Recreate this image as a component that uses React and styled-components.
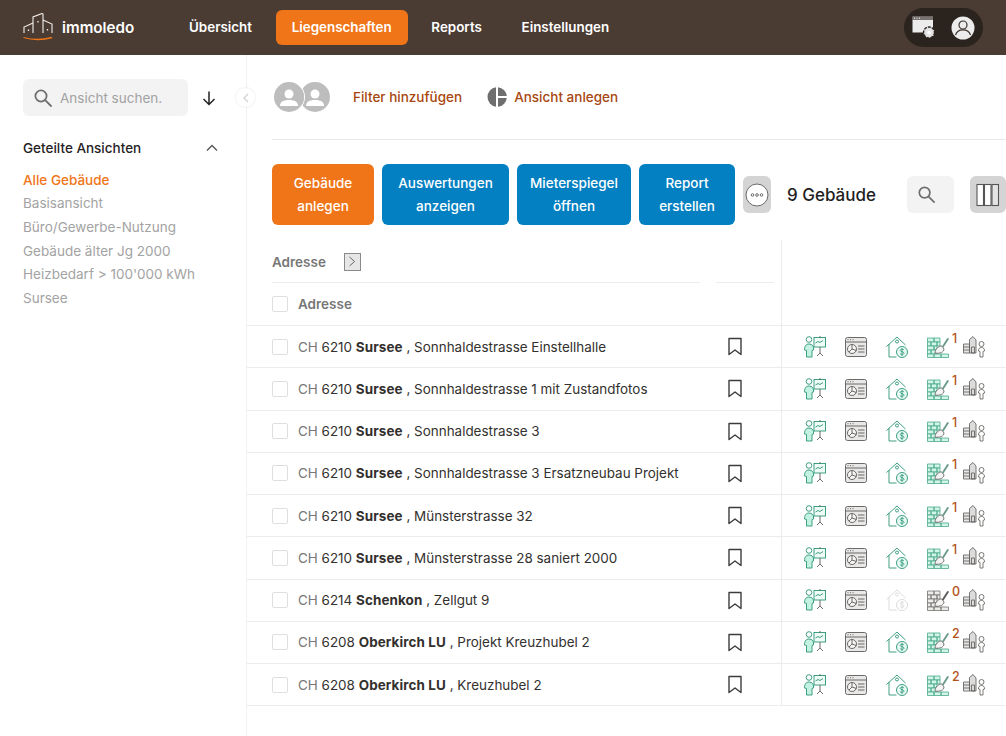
import React from 'react';
import styled, { createGlobalStyle } from 'styled-components';

const GREEN = '#2a9476';
const MINT = '#c4f2e2';
const GREY = '#5c5957';
const LIGHT = '#d8d8d8';

const rows = [
  { zip: '6210', city: 'Sursee', street: 'Sonnhaldestrasse Einstellhalle', count: 1 },
  { zip: '6210', city: 'Sursee', street: 'Sonnhaldestrasse 1 mit Zustandfotos', count: 1 },
  { zip: '6210', city: 'Sursee', street: 'Sonnhaldestrasse 3', count: 1 },
  { zip: '6210', city: 'Sursee', street: 'Sonnhaldestrasse 3 Ersatzneubau Projekt', count: 1 },
  { zip: '6210', city: 'Sursee', street: 'Münsterstrasse 32', count: 1 },
  { zip: '6210', city: 'Sursee', street: 'Münsterstrasse 28 saniert 2000', count: 1 },
  { zip: '6214', city: 'Schenkon', street: 'Zellgut 9', count: 0 },
  { zip: '6208', city: 'Oberkirch LU', street: 'Projekt Kreuzhubel 2', count: 2 },
  { zip: '6208', city: 'Oberkirch LU', street: 'Kreuzhubel 2', count: 2 },
];

const views = ['Alle Gebäude', 'Basisansicht', 'Büro/Gewerbe-Nutzung', 'Gebäude älter Jg 2000', 'Heizbedarf > 100\'000 kWh', 'Sursee'];

const GlobalStyle = createGlobalStyle`
  html, body {
    margin: 0;
    padding: 0;
    background: #fff;
    font-family: Inter, "Liberation Sans", sans-serif;
    overflow: hidden;
  }
  * { box-sizing: border-box; }
`;

const Page = styled.div`
  width: 1006px;
  height: 736px;
  overflow: hidden;
`;

const Header = styled.header`
  height: 55px;
  background: #4a3c33;
  display: flex;
  align-items: center;
  padding: 0 23px;
`;

const Logo = styled.div`
  display: flex;
  align-items: center;
  gap: 9px;
  width: 150px;
  color: #fff;
  font-size: 15.2px;
  font-weight: 600;
  padding-bottom: 1px;
`;

const Nav = styled.nav`
  display: flex;
  align-items: center;
  gap: 7.7px;
`;

const NavItem = styled.a`
  height: 35px;
  display: flex;
  align-items: center;
  padding: 0 16px 1px;
  border-radius: 6px;
  font-size: 13.4px;
  font-weight: 600;
  color: #fff;
  background: ${(p) => (p.$active ? '#ef7518' : 'transparent')};
`;

const UserPill = styled.div`
  margin-left: auto;
  width: 79px;
  height: 39px;
  border-radius: 20px;
  background: #2b231e;
  display: flex;
  align-items: center;
  justify-content: space-between;
  padding: 0 8px;
`;

const Body = styled.div`
  display: flex;
  height: 681px;
`;

const Sidebar = styled.aside`
  position: relative;
  width: 247px;
  flex: none;
  border-right: 1px solid #f1f1f1;
  padding: 24px 0 0 23px;
`;

const SearchRow = styled.div`
  display: flex;
  align-items: center;
`;

const SearchBox = styled.div`
  width: 165px;
  height: 37px;
  border-radius: 6px;
  background: #f3f3f3;
  display: flex;
  align-items: center;
  gap: 7px;
  padding-left: 10px;
  color: #a2a2a2;
  font-size: 13.5px;
  white-space: nowrap;
`;

const SortButton = styled.div`
  margin-left: 11px;
  display: flex;
`;

const CollapseButton = styled.div`
  position: absolute;
  top: 33px;
  right: -9px;
  width: 19px;
  height: 19px;
  border-radius: 50%;
  background: #fff;
  box-shadow: 0 0 3px rgba(0, 0, 0, 0.1);
  display: flex;
  align-items: center;
  justify-content: center;
`;

const SectionHead = styled.div`
  width: 195px;
  margin-top: 22.5px;
  display: flex;
  align-items: center;
  justify-content: space-between;
  font-size: 13.5px;
  font-weight: 500;
  color: #26221f;
  line-height: 18px;
`;

const ViewList = styled.ul`
  list-style: none;
  margin: 12.4px 0 0;
  padding: 0;
`;

const ViewItem = styled.li`
  font-size: 13.5px;
  line-height: 23.6px;
  color: ${(p) => (p.$active ? '#ef7518' : '#a3a3a3')};
  font-weight: ${(p) => (p.$active ? 500 : 400)};
`;

const Main = styled.main`
  flex: 1;
  min-width: 0;
`;

const FilterBar = styled.div`
  height: 85px;
  margin-left: 25px;
  border-bottom: 1px solid #e8e8e8;
  display: flex;
  align-items: center;
  padding: 0 0 1px 2px;
`;

const Avatars = styled.div`
  display: flex;
  width: 79px;
  flex: none;
`;

const FrontAvatar = styled.span`
  position: relative;
  z-index: 1;
  display: flex;
  border-radius: 50%;
  box-shadow: 0 0 0 1px #fff;
`;

const BackAvatar = styled.span`
  display: flex;
  margin-left: -4px;
`;

const LinkText = styled.span`
  display: flex;
  align-items: center;
  gap: 7px;
  color: #a8470f;
  font-size: 13.5px;
  font-weight: 500;
  margin-right: 25px;
`;

const Toolbar = styled.div`
  margin: 24px 0 0 25px;
  display: flex;
  align-items: center;
  height: 61px;
`;

const ActionButton = styled.div`
  width: ${(p) => p.$w}px;
  height: 61px;
  flex: none;
  margin-right: 8px;
  border-radius: 6px;
  background: ${(p) => (p.$orange ? '#ef7518' : '#0380c1')};
  color: #fff;
  font-size: 13.5px;
  font-weight: 500;
  line-height: 23px;
  padding-top: 1px;
  text-align: center;
  display: flex;
  align-items: center;
  justify-content: center;
`;

const SquareButton = styled.div`
  flex: none;
  width: ${(p) => p.$w}px;
  height: 37px;
  padding-right: ${(p) => p.$pr || 0}px;
  border-radius: 6px;
  background: ${(p) => (p.$dark ? '#d4d4d4' : '#f3f3f3')};
  display: flex;
  align-items: center;
  justify-content: center;
`;

const Count = styled.div`
  flex: none;
  width: 136px;
  padding-left: 16px;
  font-size: 17px;
  font-weight: 500;
  color: #1f1f1f;
`;

const Spacer = styled.div`
  flex: none;
  width: 16px;
`;

const Table = styled.div`
  margin-top: 15px;
  display: grid;
  grid-template-columns: 468px 66px 225px;
`;

const HeadLeft = styled.div`
  height: 43px;
  margin: 0 15px 0 25px;
  border-bottom: 1px solid #ececec;
  display: flex;
  align-items: center;
  padding-top: 1px;
  gap: 18px;
  color: #777;
  font-size: 13.5px;
  font-weight: 600;
`;

const ExpandButton = styled.div`
  width: 17px;
  height: 18px;
  border: 1px solid #8a8a8a;
  background: #e6e6e6;
  display: flex;
  align-items: center;
  justify-content: center;
`;

const HeadMiddle = styled.div`
  height: 43px;
  margin: 0 7px 0 1px;
  border-bottom: 1px solid #ececec;
`;

const RightCell = styled.div`
  border-left: 1px solid #ececec;
  border-bottom: ${(p) => (p.$line ? '1px solid #ececec' : 'none')};
  height: 43px;
`;

const TitleCell = styled.div`
  height: 43px;
  grid-column: 1 / 3;
  border-bottom: 1px solid #ececec;
  padding-left: 25px;
  display: flex;
  align-items: center;
  gap: 10px;
  color: #777;
  font-size: 13.5px;
  font-weight: 600;
`;

const Check = styled.span`
  flex: none;
  width: 16px;
  height: 16px;
  border: 1.5px solid #dedede;
  border-radius: 2px;
  background: #fff;
`;

const AddressCell = styled.div`
  height: 42.25px;
  padding-left: 25px;
  border-bottom: 1px solid #ececec;
  display: flex;
  align-items: center;
  gap: 10px;
  font-size: 13.45px;
  color: #33302e;
  white-space: nowrap;

  b {
    letter-spacing: 0.1px;
  }
`;

const Country = styled.span`
  color: #777;
`;

const BookCell = styled.div`
  height: 42.25px;
  border-bottom: 1px solid #ececec;
  display: flex;
  align-items: center;
  padding-left: 12px;
`;

const IconsCell = styled.div`
  height: 42.25px;
  border-left: 1px solid #ececec;
  border-bottom: 1px solid #ececec;
  display: flex;
  align-items: center;
  padding-left: 22px;
`;

const IconSlot = styled.div`
  position: relative;
  flex: none;
  width: ${(p) => p.$w}px;
  display: flex;
`;

const Badge = styled.span`
  position: absolute;
  top: -4px;
  left: 25px;
  font-size: 12.5px;
  font-weight: 500;
  color: #b3521a;
  line-height: 14px;
`;

function LogoMark() {
  return (
    <svg width="30" height="29" viewBox="0 0 30 29" fill="none" stroke="#f3efec" strokeWidth="1.1">
      <path d="M1 20v-6l9-4" />
      <path d="M10 20V4l9-3.500 1 .5v19" />
      <path d="M20 7l9 4v9" />
      <path d="M5.500 16.500v1.500M15 8v1.500M24.500 16v1.500" strokeWidth="1.300" />
      <path d="M.5 24.500Q14.500 28.500 29 24.500" stroke="#ef7518" strokeWidth="1.300" />
    </svg>
  );
}

function PersonDisc() {
  return (
    <svg width="30" height="30" viewBox="0 0 30 30">
      <circle cx="15" cy="15" r="15" fill="#bdbdbd" />
      <circle cx="15" cy="12" r="4.500" fill="#fff" />
      <path d="M6 24c0-4 3-6 9-6s9 2 9 6z" fill="#fff" />
    </svg>
  );
}

function SearchIcon({ color = '#6f6f6f', size = 20 }) {
  return (
    <svg width={size} height={size} viewBox="0 0 20 20" fill="none" stroke={color} strokeWidth="1.800">
      <circle cx="8" cy="8" r="5.600" />
      <path d="M12.200 12.200 18 18" strokeLinecap="round" />
    </svg>
  );
}

function BrowserGear() {
  return (
    <svg width="24" height="24" viewBox="0 0 24 24">
      <rect x=".5" y=".5" width="20.500" height="16" fill="#ececec" />
      <rect x=".5" y=".5" width="20.500" height="3.500" fill="#2b231e" opacity=".6" />
      <path d="M2 2.200h1M4.500 2.200h1M7 2.200h1" stroke="#fff" />
      <circle cx="17" cy="16.500" r="5.500" fill="#e2e2e2" stroke="#2b231e" strokeWidth="1.400" strokeDasharray="3 1" />
      <circle cx="17" cy="16.500" r="1.800" fill="#fff" />
    </svg>
  );
}

function UserCircle() {
  return (
    <svg width="24" height="24" viewBox="0 0 24 24" fill="none" stroke="#3a322c" strokeWidth="1.200">
      <circle cx="12" cy="12" r="11.500" fill="#ececec" stroke="none" />
      <circle cx="12" cy="9" r="4" />
      <path d="M4.500 19c1-3.600 4-5.200 7.500-5.200s6.500 1.600 7.500 5.200" />
    </svg>
  );
}

function PieIcon() {
  return (
    <svg width="20" height="20" viewBox="0 0 20 20" fill="#6e6e6e">
      <path d="M9 .2A9.900 9.900 0 0 0 9 19.800z" />
      <path d="M11 .2V9h8.800A9.900 9.900 0 0 0 11 .2z" />
      <path d="M11 11v8.800a9.900 9.900 0 0 0 8.800-8.800z" />
    </svg>
  );
}

function DotsIcon() {
  return (
    <svg width="24" height="24" viewBox="0 0 24 24" fill="#fff" stroke="#6a6a6a">
      <circle cx="12" cy="12" r="11" />
      <circle cx="7.500" cy="12" r="1.300" fill="none" />
      <circle cx="12" cy="12" r="1.300" fill="none" />
      <circle cx="16.500" cy="12" r="1.300" fill="none" />
    </svg>
  );
}

function ColumnsIcon() {
  return (
    <svg width="24" height="24" viewBox="0 0 24 24" fill="#fff" stroke="#555" strokeWidth="1.100">
      <rect x="1" y="1.500" width="6.500" height="21" />
      <rect x="8.500" y="1.500" width="6.500" height="21" />
      <rect x="16" y="1.500" width="6.500" height="21" fill="#e4e4e4" />
    </svg>
  );
}

function BookmarkIcon() {
  return (
    <svg width="16" height="19" viewBox="0 0 16 19" fill="none" stroke="#3c3c3c" strokeWidth="1.400" strokeLinejoin="round">
      <path d="M2 1.500h12v16l-6-4.500-6 4.500z" />
    </svg>
  );
}

function PresenterIcon() {
  return (
    <svg width="22" height="22" viewBox="0 0 22 22" fill="none" stroke={GREEN} strokeWidth=".9">
      <circle cx="5" cy="3.500" r="2.800" />
      <path d="M.5 14c0-4 1.500-6 4.500-6s4.500 2 4.500 4v2l-1.500.5V21H2.500v-6.500z" fill={MINT} />
      <rect x="10" y="1.500" width="11.500" height="9.500" fill="#eefbf6" />
      <path d="M11.500 7l2.500-1.500 2 1 3-2" />
      <path d="M16 0v1.500M16 11v6M13 20l3-3 3 3" stroke={GREY} />
    </svg>
  );
}

function BrowserChartIcon() {
  return (
    <svg width="22" height="20" viewBox="0 0 22 20" fill="none" stroke={GREY} strokeWidth=".9">
      <rect x=".5" y=".5" width="21" height="19" rx="2" fill="#e8e8e8" />
      <path d="M.5 5h21" />
      <path d="M2.500 2.700h1M5 2.700h1M7.500 2.700h1" />
      <circle cx="7" cy="12" r="4.500" fill="#f6f6f6" />
      <path d="M7 12V7.500M7 12l4.300 1.500M7 12l-3 3" />
      <path d="M13 9h6.500M13 12h6.500M13 15h6.500" />
    </svg>
  );
}

function HouseIcon({ off }) {
  const c = off ? LIGHT : GREEN;
  return (
    <svg width="22" height="22" viewBox="0 0 22 22" fill="none" stroke={c} strokeWidth=".9">
      <path d="M.5 10.500 11 1l8.500 8" />
      <path d="M3 8v13h7.500" />
      <circle cx="11" cy="5.500" r="1.500" />
      <circle cx="16" cy="16" r="5.500" fill={off ? '#fff' : '#e6f9f2'} />
      <path d="M18 14c-.5-1-3.500-1.200-3.800.3-.2 1.800 4 1 3.800 3-.2 1.500-3.300 1.300-4 .2M16 12v8" strokeWidth=".8" />
    </svg>
  );
}

function WallIcon({ off }) {
  const c = off ? '#77736f' : '#4aa88c';
  return (
    <svg width="22" height="22" viewBox="0 0 22 22" fill={off ? '#ececec' : '#d2f5e8'} stroke={c} strokeWidth=".8">
      <path d="M.5 2h6.500v4H.5zM7 2h6v4H7z" />
      <path d="M.5 6H4v4H.5zM4 6h6v4H4zM10 6h3v4h-3z" />
      <path d="M.5 10H7v4H.5zM7 10h3v4H7z" />
      <path d="M.5 14H4v4H.5zM4 14h6v4H4z" />
      <path d="M.5 18H7v3.500H.5zM7 18h7v3.500H7zM14 18h7.500v3.500H14z" />
      <path d="M8 17c0-4 4-7.500 7-7l2 3c0 3-4 5-9 4z" fill="#f4f4f4" stroke={GREY} />
      <path d="M16 10.500l4.800-7.500" fill="none" stroke={off ? GREY : '#6c9a8d'} strokeWidth="1.900" strokeLinecap="round" />
    </svg>
  );
}

function BuildingPersonIcon() {
  return (
    <svg width="23" height="22" viewBox="0 0 23 22" fill="none" stroke={GREY} strokeWidth=".8">
      <path d="M.5 8H6.500v9H.5z" fill="#e6e6e6" />
      <path d="M6.500 17V3.500L10 .5l3 3.500v13z" fill="#dcdcdc" />
      <path d="M.5 11h6M.5 14h6M8.500 11h3v6h-3z" />
      <circle cx="18.500" cy="8" r="2.500" fill="#fff" />
      <path d="M15.500 15c0-2.500 1-3.500 3-3.500s3 1 3 3.500l-1.500.5V21h-3v-5.500z" fill="#fff" />
    </svg>
  );
}

function RowIcons({ count }) {
  return (
    <>
      <IconSlot $w={41}><PresenterIcon /></IconSlot>
      <IconSlot $w={41}><BrowserChartIcon /></IconSlot>
      <IconSlot $w={41}><HouseIcon off={count === 0} /></IconSlot>
      <IconSlot $w={36}>
        <WallIcon off={count === 0} />
        <Badge>{count}</Badge>
      </IconSlot>
      <IconSlot $w={24}><BuildingPersonIcon /></IconSlot>
    </>
  );
}

export default function App() {
  return (
    <Page>
      <GlobalStyle />
      <Header>
        <Logo>
          <LogoMark />
          immoledo
        </Logo>
        <Nav>
          <NavItem>Übersicht</NavItem>
          <NavItem $active>Liegenschaften</NavItem>
          <NavItem>Reports</NavItem>
          <NavItem>Einstellungen</NavItem>
        </Nav>
        <UserPill>
          <BrowserGear />
          <UserCircle />
        </UserPill>
      </Header>
      <Body>
        <Sidebar>
          <SearchRow>
            <SearchBox>
              <SearchIcon />
              Ansicht suchen.
            </SearchBox>
            <SortButton>
              <svg width="20" height="20" viewBox="0 0 20 20" fill="none" stroke="#222" strokeWidth="1.500">
                <path d="M10 3.500v13M4.500 11l5.500 5.500 5.500-5.500" />
              </svg>
            </SortButton>
          </SearchRow>
          <CollapseButton>
            <svg width="8" height="10" viewBox="0 0 8 10" fill="none" stroke="#d0d0d0" strokeWidth="1.200">
              <path d="M6 1 2 5l4 4" />
            </svg>
          </CollapseButton>
          <SectionHead>
            Geteilte Ansichten
            <svg width="12" height="8" viewBox="0 0 12 8" fill="none" stroke="#555" strokeWidth="1.300">
              <path d="M1 6.500 6 1.500l5 5" />
            </svg>
          </SectionHead>
          <ViewList>
            {views.map((v, i) => (
              <ViewItem key={v} $active={i === 0}>{v}</ViewItem>
            ))}
          </ViewList>
        </Sidebar>
        <Main>
          <FilterBar>
            <Avatars>
              <FrontAvatar><PersonDisc /></FrontAvatar>
              <BackAvatar><PersonDisc /></BackAvatar>
            </Avatars>
            <LinkText>Filter hinzufügen</LinkText>
            <LinkText><PieIcon />Ansicht anlegen</LinkText>
          </FilterBar>
          <Toolbar>
            <ActionButton $w={102} $orange>Gebäude<br />anlegen</ActionButton>
            <ActionButton $w={127}>Auswertungen<br />anzeigen</ActionButton>
            <ActionButton $w={114}>Mieterspiegel<br />öffnen</ActionButton>
            <ActionButton $w={96}>Report<br />erstellen</ActionButton>
            <SquareButton $w={28} $dark><DotsIcon /></SquareButton>
            <Count>9 Gebäude</Count>
            <SquareButton $w={47} $pr={8}><SearchIcon size={19} /></SquareButton>
            <Spacer />
            <SquareButton $w={36} $dark><ColumnsIcon /></SquareButton>
          </Toolbar>
          <Table>
            <HeadLeft>
              Adresse
              <ExpandButton>
                <svg width="8" height="11" viewBox="0 0 8 11" fill="none" stroke="#666">
                  <path d="M1.500 1 6.500 5.500 1.500 10" />
                </svg>
              </ExpandButton>
            </HeadLeft>
            <HeadMiddle />
            <RightCell />
            <TitleCell>
              <Check />
              Adresse
            </TitleCell>
            <RightCell $line />
            {rows.map((r) => (
              <React.Fragment key={r.street}>
                <AddressCell>
                  <Check />
                  <span>
                    <Country>CH</Country> {r.zip} <b>{r.city}</b> , {r.street}
                  </span>
                </AddressCell>
                <BookCell><BookmarkIcon /></BookCell>
                <IconsCell><RowIcons count={r.count} /></IconsCell>
              </React.Fragment>
            ))}
          </Table>
        </Main>
      </Body>
    </Page>
  );
}
